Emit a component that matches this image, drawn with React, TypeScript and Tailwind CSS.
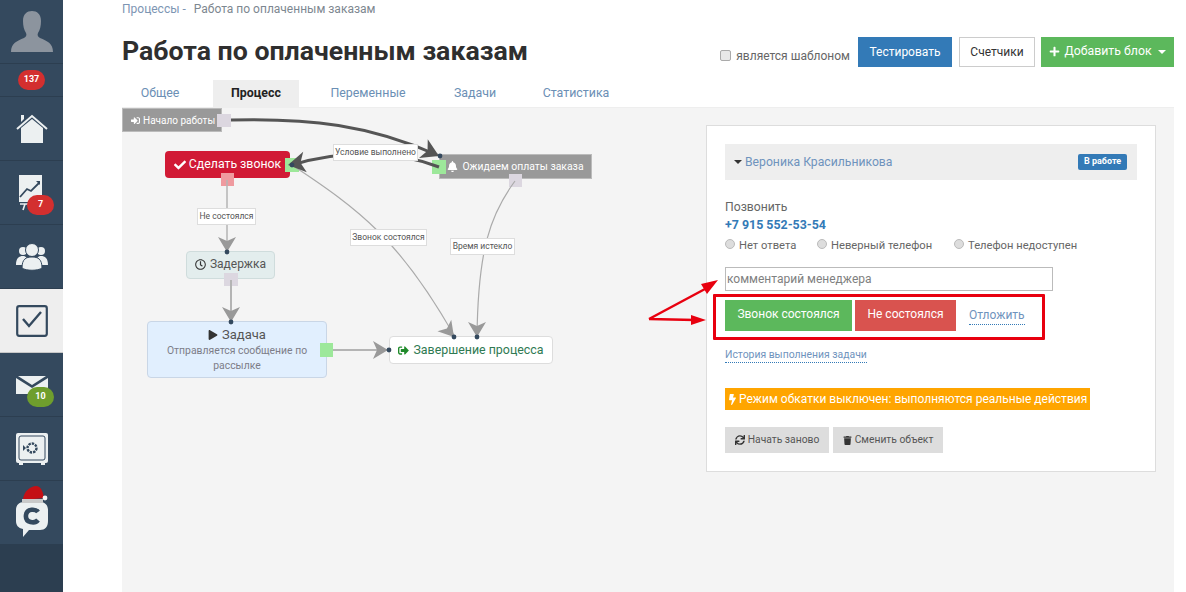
import type { ReactNode } from 'react'
import { FaBell, FaBolt, FaCheck, FaPlay, FaPlus, FaRegClock, FaSignInAlt, FaSignOutAlt, FaSync, FaTrash } from 'react-icons/fa'

const NAVY = '#34495e'
const ICON = '#ecf0f1'

function Badge({ color, children }: { color: string; children: ReactNode }) {
  return (
    <span
      className="absolute left-[27px] top-[34px] flex h-5 w-[27px] items-center justify-center rounded-[10px] text-[9px] font-bold text-white"
      style={{ backgroundColor: color }}
    >
      {children}
    </span>
  )
}

function SideItem({ active, children }: { active?: boolean; children: ReactNode }) {
  return (
    <div className={`relative flex h-[64px] items-center justify-center border-b ${active ? 'border-[#c8c8c8] bg-[#eeeeee]' : 'border-[#2c3e50] bg-[#34495e]'}`}>
      {children}
    </div>
  )
}

function Sidebar() {
  return (
    <aside className="flex h-full w-[63px] shrink-0 flex-col bg-[#2c3e50]">
      <SideItem>
        <svg width="42" height="42" viewBox="0 0 42 42">
          <path fill="#8c949e" d="M0 41 C0 32 6 30 13 27 C15 26 16 24 15 22 C13 19 12 15 12 10 C12 3 16 0 21 0 C26 0 30 3 30 10 C30 15 29 19 27 22 C26 24 27 26 29 27 C36 30 42 32 42 41 Z" />
        </svg>
      </SideItem>
      <div className="flex h-[33px] items-center justify-center border-b border-[#2c3e50] bg-[#34495e]">
        <span className="flex h-5 w-[27px] items-center justify-center rounded-[10px] bg-[#d32f2f] text-[9px] font-bold text-white">137</span>
      </div>
      <SideItem>
        <svg width="32" height="31" viewBox="0 0 32 31">
          <path fill={ICON} d="M5 30 V15 L16 6 L27 15 V30 Z" />
          <path fill="none" stroke={ICON} strokeWidth="2" d="M1 16 L16 3 L31 16" />
          <path fill={ICON} d="M5 2 H8 V6 L5 9 Z" />
        </svg>
      </SideItem>
      <SideItem>
        <svg width="24" height="36" viewBox="0 0 24 36" className="mr-[1px]">
          <rect x="0" y="0" width="23" height="27" fill={ICON} />
          <path fill="none" stroke={NAVY} strokeWidth="1.8" d="M1 22 L8 14 L12 16 L20 8" />
          <path fill={NAVY} d="M17 6 H21 V10 Z" />
          <path fill="none" stroke={ICON} strokeWidth="1.6" d="M1 29 H15 M6 29 L4 35" />
        </svg>
        <Badge color="#d32f2f">7</Badge>
      </SideItem>
      <SideItem>
        <svg width="32" height="28" viewBox="0 0 32 28">
          <circle cx="7" cy="8" r="4" fill={ICON} />
          <circle cx="25" cy="8" r="4" fill={ICON} />
          <path fill={ICON} d="M0 22 C0 15 3 13 7 13 C10 13 12 15 12 22 Z M20 22 C20 15 22 13 25 13 C29 13 32 15 32 22 Z" />
          <circle cx="16" cy="7" r="6.5" fill={ICON} stroke={NAVY} />
          <path fill={ICON} stroke={NAVY} d="M6 25 C6 16 10 14 16 14 C22 14 26 16 26 25 C22 28 10 28 6 25 Z" />
        </svg>
      </SideItem>
      <SideItem active>
        <svg width="32" height="32" viewBox="0 0 32 32">
          <rect x="1.2" y="1.2" width="29.6" height="29.6" rx="2" fill="none" stroke={NAVY} strokeWidth="2.2" />
          <path fill="none" stroke={NAVY} strokeWidth="2.4" d="M7 14 L13 21 L25 7" />
        </svg>
      </SideItem>
      <SideItem>
        <svg width="32" height="18" viewBox="0 0 32 18">
          <path fill={ICON} d="M0 2 L16 12 L32 2 V18 H0 Z" />
          <path fill={ICON} d="M2 0 H30 L16 9 Z" />
        </svg>
        <Badge color="#6f9e2d">10</Badge>
      </SideItem>
      <SideItem>
        <svg width="32" height="32" viewBox="0 0 32 32">
          <rect x="0" y="0" width="32" height="30" rx="2" fill={ICON} />
          <rect x="3" y="3" width="26" height="24" rx="2" fill="none" stroke={NAVY} strokeWidth="1" />
          <circle cx="16" cy="15" r="4.5" fill="none" stroke={NAVY} strokeWidth="2.4" strokeDasharray="2.4 1" />
          <path fill={NAVY} d="M7 12 L10 15 L7 18 Z" />
          <path fill={ICON} d="M3 30 H7 V32 H3 Z M25 30 H29 V32 H25 Z" />
        </svg>
      </SideItem>
      <SideItem>
        <svg width="34" height="52" viewBox="0 0 34 52" className="mt-[-2px]">
          <path fill={ICON} d="M9 16 H25 C30 16 33 19 33 24 V35 C33 41 30 44 25 44 H14 L8 51 L8 43 C3 42 1 39 1 35 V24 C1 19 4 16 9 16 Z" />
          <path fill="none" stroke={NAVY} strokeWidth="4.6" d="M23 26 C21 23 12 22 11 29 C10 37 20 38 23 34" />
          <path fill="#c40f14" d="M8 13 C9 5 16 0 21 0 C26 0 28 6 29 12 L8 14 Z" />
          <path fill="#c9c9c9" d="M7 13 H28 V17 H7 Z" />
          <circle cx="30" cy="12" r="2.4" fill="#f4f4f4" />
        </svg>
      </SideItem>
    </aside>
  )
}

function Tab({ className, active, children }: { className: string; active?: boolean; children: ReactNode }) {
  return (
    <span className={`flex h-[27px] items-center justify-center ${className} ${active ? 'bg-[#eeeeee] font-bold text-[#222222]' : 'text-[#6b8fb5]'}`}>
      {children}
    </span>
  )
}

function Header() {
  return (
    <header className="h-[107px] shrink-0">
      <div className="flex h-[17px] items-center gap-2 text-[12px] text-[#7d8790]">
        <span className="text-[#7d95b3]">Процессы -</span>
        <span>Работа по оплаченным заказам</span>
      </div>
      <div className="mt-[19px] flex h-[31px] items-center">
        <h1 className="text-[26.7px] font-bold leading-none text-[#2f2f2f]">Работа по оплаченным заказам</h1>
        <label className="ml-auto mt-2 flex items-center gap-[5px] text-[12px] text-[#666666]">
          <span className="h-[11px] w-[11px] rounded-[2px] border border-[#aaaaaa] bg-[#e8e8e8]" />
          является шаблоном
        </label>
        <button className="ml-[8px] h-[30px] w-[94px] bg-[#337ab7] text-[12px] text-white">Тестировать</button>
        <button className="ml-[7px] h-[30px] w-[76px] border border-[#cccccc] bg-white text-[12px] text-[#333333]">Счетчики</button>
        <button className="ml-[6px] flex h-[30px] w-[133px] items-center justify-center gap-1 bg-[#5cb85c] text-[12.3px] text-white">
          <FaPlus className="text-[11px]" />
          Добавить блок
          <span className="ml-[2px] border-x-[4px] border-t-[4px] border-x-transparent border-t-white" />
        </button>
      </div>
      <nav className="mt-[13px] flex text-[12.4px]">
        <Tab className="w-[76px]">Общее</Tab>
        <Tab className="ml-[15px] w-[86px]" active>Процесс</Tab>
        <Tab className="w-[138px]">Переменные</Tab>
        <Tab className="w-[76px]">Задачи</Tab>
        <Tab className="w-[126px]">Статистика</Tab>
      </nav>
    </header>
  )
}

function Arrow({ x, y, angle, fill, size = 1 }: { x: number; y: number; angle: number; fill: string; size?: number }) {
  // dart shape, tip at 0,0, pointing right before rotation
  return <polygon points="0,0 -15,-9 -11,0 -15,9" fill={fill} transform={`translate(${x} ${y}) rotate(${angle}) scale(${size})`} />
}

function Edges() {
  return (
    <svg className="absolute left-0 top-0" width="600" height="300" viewBox="122 108 600 300" fill="none">
      <path d="M231 120 C 310 118, 370 125, 437 155" stroke="#555555" strokeWidth="3" />
      <path d="M292 165 C 340 150, 395 150, 439 167" stroke="#555555" strokeWidth="3" />
      <path d="M292 165 C 360 210, 400 240, 455 337" stroke="#aaaaaa" strokeWidth="1.2" />
      <path d="M515 181 C 490 215, 478 250, 477 337" stroke="#aaaaaa" strokeWidth="1.2" />
      <path d="M227 180 V 250" stroke="#b4b4b4" strokeWidth="1.5" />
      <path d="M231 280 V 320" stroke="#b4b4b4" strokeWidth="2" />
      <path d="M333 350 H 388" stroke="#b4b4b4" strokeWidth="2" />
      <Arrow x={439} y={156} angle={25} fill="#555555" size={1.15} />
      <Arrow x={288} y={165} angle={170} fill="#555555" size={1.15} />
      <Arrow x={227} y={252} angle={90} fill="#999999" />
      <Arrow x={231} y={322} angle={90} fill="#999999" />
      <Arrow x={388} y={350} angle={0} fill="#999999" />
      <Arrow x={454} y={337} angle={50} fill="#999999" />
      <Arrow x={477} y={337} angle={90} fill="#999999" />
      <circle cx="227" cy="252" r="2.4" fill={NAVY} />
      <circle cx="231" cy="322" r="2.4" fill={NAVY} />
      <circle cx="389" cy="350" r="2.4" fill={NAVY} />
      <circle cx="454" cy="337" r="2.4" fill={NAVY} />
      <circle cx="477" cy="337" r="2.4" fill={NAVY} />
      <circle cx="440" cy="156" r="2.4" fill={NAVY} />
      <circle cx="292" cy="165" r="2.4" fill={NAVY} />
    </svg>
  )
}

function Diagram() {
  return (
    <>
      <div className="absolute left-0 top-0 flex h-6 w-[100px] items-center gap-[3px] border border-[#bbbbbb] bg-[#999999] pl-2 text-[10px] text-white">
        <FaSignInAlt className="text-[9px]" /> Начало работы
      </div>
      <div className="absolute left-[95px] top-[6px] h-[13px] w-[14px] bg-[#dcd7e0]" />

      <div className="absolute left-[43px] top-[43px] flex h-[27px] w-[125px] items-center justify-center gap-[3px] rounded-[4px] bg-[#d11a35] text-[12.3px] text-white">
        <FaCheck className="text-[12px]" /> Сделать звонок
      </div>
      <div className="absolute left-[163px] top-[50px] h-[14px] w-[14px] bg-[#9de89a]" />
      <div className="absolute left-[99px] top-[65px] h-[13px] w-[13px] bg-[#ef9a9f]" />

      <div className="absolute left-[64px] top-[143px] flex h-[28px] w-[89px] items-center justify-center gap-1 rounded-[4px] border border-[#cfdcdc] bg-[#e3eded] pb-[2px] text-[12px] text-[#555555]">
        <FaRegClock className="text-[11px] text-[#333333]" /> Задержка
      </div>
      <div className="absolute left-[102px] top-[165px] h-[13px] w-[14px] bg-[#dcd7e0]" />

      <div className="absolute left-[25px] top-[213px] flex h-[57px] w-[180px] flex-col items-center rounded-[4px] border border-[#c9d6e6] bg-[#e1effe] px-3 pt-[5px] text-center text-[#555555]">
        <div className="flex items-center gap-1 text-[13px] leading-[16px]">
          <FaPlay className="text-[10px] text-[#333333]" /> Задача
        </div>
        <div className="mt-[1px] text-[10.4px] leading-[14.5px] text-[#7d7d88]">Отправляется сообщение по рассылке</div>
      </div>
      <div className="absolute left-[198px] top-[235px] h-[14px] w-[13px] bg-[#9de89a]" />

      <div className="absolute left-[267px] top-[228px] flex h-[28px] w-[164px] items-center justify-center gap-1 rounded-[4px] border border-[#dddddd] bg-white text-[12.4px] text-[#2f7a52]">
        <FaSignOutAlt className="text-[11px] text-[#1f8a2a]" /> Завершение процесса
      </div>

      <div className="absolute left-[317px] top-[46px] flex h-[25px] w-[153px] items-center justify-center gap-1 border border-[#bbbbbb] bg-[#999999] text-[10.4px] text-white">
        <FaBell className="text-[11px]" /> Ожидаем оплаты заказа
      </div>
      <div className="absolute left-[310px] top-[52px] h-[14px] w-[14px] bg-[#9de89a]" />
      <div className="absolute left-[387px] top-[66px] h-[13px] w-[13px] bg-[#dcd7e0]" />

      <Edges />

      <EdgeLabel className="left-[211px] top-[36px] w-[85px]">Условие выполнено</EdgeLabel>
      <EdgeLabel className="left-[228px] top-[121px] w-[77px]">Звонок состоялся</EdgeLabel>
      <EdgeLabel className="left-[328px] top-[130px] w-[65px]">Время истекло</EdgeLabel>
      <EdgeLabel className="left-[75px] top-[100px] w-[59px]">Не состоялся</EdgeLabel>
    </>
  )
}

function EdgeLabel({ className, children }: { className: string; children: ReactNode }) {
  return (
    <div className={`absolute flex h-[17px] items-center justify-center whitespace-nowrap border border-[#dddddd] bg-white text-[8.5px] text-[#555555] ${className}`}>
      {children}
    </div>
  )
}

function Radio({ children, className }: { children: ReactNode; className: string }) {
  return (
    <label className={`flex items-center gap-[4px] whitespace-nowrap ${className}`}>
      <span className="mb-[3px] h-[10px] w-[10px] rounded-full border border-[#bbbbbb] bg-[#dddddd]" />
      {children}
    </label>
  )
}

function TaskPanel() {
  return (
    <section className="relative h-[347px] w-[450px] border border-[#dddddd] bg-white px-[18px] pt-[18px] text-[#666666]">
      <div className="flex h-9 items-center bg-[#eeeeee] pl-[9px] pr-[10px]">
        <span className="mr-[3px] border-x-[4px] border-t-[4px] border-x-transparent border-t-[#333333]" />
        <span className="text-[12.2px] text-[#6f93bd]">Вероника Красильникова</span>
        <span className="ml-auto flex h-4 w-[49px] items-center justify-center rounded-[2px] bg-[#337ab7] text-[9px] font-bold text-white">В работе</span>
      </div>
      <div className="mt-[18px] text-[12.2px] leading-[18px]">Позвонить</div>
      <div className="text-[12.4px] font-bold leading-[18px] text-[#337ab7]">+7 915 552-53-54</div>
      <div className="mt-[2px] flex h-[20px] items-center text-[11.2px]">
        <Radio className="w-[92px]">Нет ответа</Radio>
        <Radio className="w-[137px]">Неверный телефон</Radio>
        <Radio className="w-[130px]">Телефон недоступен</Radio>
      </div>
      <div className="mt-[11px] flex h-6 w-[328px] items-center border border-[#bbbbbb] px-[1px] text-[12px] text-[#808080]">комментарий менеджера</div>
      <div className="mt-[9px] flex h-[31px] items-center pb-[1px] text-[12px] text-white">
        <button className="h-[31px] w-[127px] bg-[#5cb85c] pb-[2px]">Звонок состоялся</button>
        <button className="ml-[3px] h-[31px] w-[101px] bg-[#d9534f] pb-[2px]">Не состоялся</button>
        <span className="ml-[13px] border-b border-dotted border-[#337ab7] text-[#6f93bd]">Отложить</span>
      </div>
      <div className="mt-[16px] w-fit border-b border-dotted border-[#337ab7] text-[10.4px] leading-[15px] text-[#6f93bd]">История выполнения задачи</div>
      <div className="mt-[25px] flex h-[22px] w-[365px] items-center gap-px whitespace-nowrap bg-[#ffa500] pl-[2px] text-[12px] text-white">
        <FaBolt className="shrink-0 text-[11px]" /> Режим обкатки выключен: выполняются реальные действия
      </div>
      <div className="mt-[17px] flex gap-1 text-[10.3px] text-[#555555]">
        <button className="flex h-[26px] w-[104px] items-center justify-center gap-[3px] bg-[#dddddd]">
          <FaSync className="text-[10px] text-[#333333]" /> Начать заново
        </button>
        <button className="flex h-[26px] w-[110px] items-center justify-center gap-[3px] bg-[#dddddd]">
          <FaTrash className="text-[9px] text-[#333333]" /> Сменить объект
        </button>
      </div>
      {/* annotation drawn over the screenshot */}
      <div className="absolute left-[6px] top-[168px] h-[46px] w-[332px] rounded-[1px] border-[3px] border-[#e8000f]" />
    </section>
  )
}

function RedArrows() {
  return (
    <svg className="absolute left-[520px] top-[167px]" width="80" height="50" viewBox="642 275 80 50" fill="none">
      <path d="M649 319 L705 289 M649 319 L695 320" stroke="#e8000f" strokeWidth="2.5" strokeLinejoin="round" />
      <polygon points="718,280 701,284 707,294" fill="#e8000f" />
      <polygon points="706,320 691,315 691,325" fill="#e8000f" />
    </svg>
  )
}

export default function App() {
  return (
    <div className="flex h-[592px] w-[1186px] overflow-hidden bg-white font-['Roboto',sans-serif]">
      <Sidebar />
      <main className="flex min-w-0 flex-1 flex-col pl-[59px] pr-3">
        <Header />
        <div className="relative flex-1 border-t border-[#eeeeee] bg-[#f4f4f4] pl-[584px] pt-[17px]">
          <Diagram />
          <TaskPanel />
          <RedArrows />
        </div>
      </main>
    </div>
  )
}
